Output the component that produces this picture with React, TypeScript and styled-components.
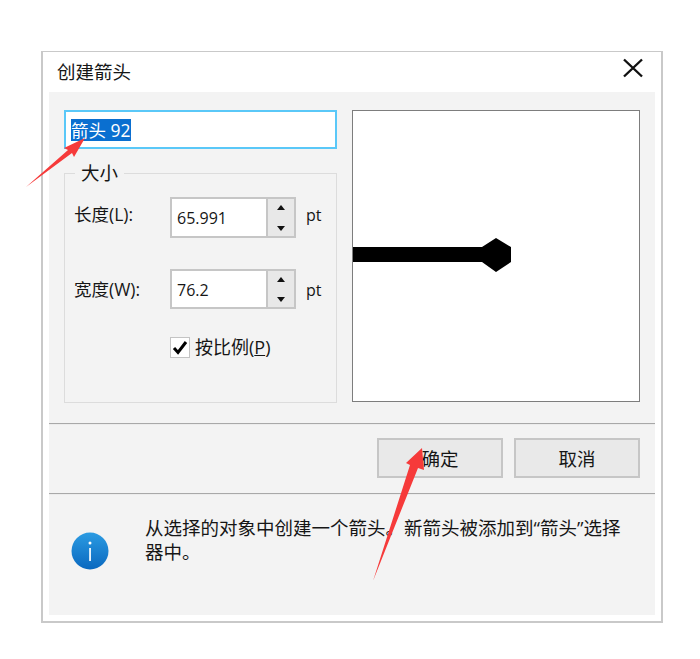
import React from "react";
import styled, { createGlobalStyle } from "styled-components";

const Global = createGlobalStyle`
  html, body { margin: 0; padding: 0; background: #fff; }
  body { font-family: "Open Sans", "Noto Sans CJK SC", sans-serif; color: #161616; }
  * { box-sizing: border-box; }
`;

const Page = styled.div`
  position: relative;
  width: 700px;
  height: 659px;
  padding: 51px 37px 37px 41px;
`;

const Dialog = styled.div`
  width: 622px;
  height: 572px;
  background: #fff;
  border: 2px solid #c9c9c9;
  border-top-width: 1px;
  display: flex;
  flex-direction: column;
`;

const TitleBar = styled.div`
  height: 40px;
  flex: none;
  display: flex;
  align-items: center;
  justify-content: space-between;
  padding: 0 17px 0 14px;
`;

const Title = styled.div`
  font-size: 18.5px;
  line-height: 40px;
`;

const CloseIcon = styled.svg`
  display: block;
  width: 22px;
  height: 20px;
  margin-top: -8px;
`;

const Panel = styled.div`
  flex: 1;
  margin: 0 6px 6px 6px;
  background: #f3f3f3;
  display: flex;
  flex-direction: column;
`;

const Main = styled.div`
  height: 331px;
  flex: none;
  padding: 18px 15px 0;
  display: flex;
  gap: 15px;
`;

const LeftCol = styled.div`
  width: 273px;
  display: flex;
  flex-direction: column;
  gap: 14px;
`;

const NameBox = styled.div`
  height: 39px;
  background: #fff;
  border: 2px solid #5ac8f8;
  padding: 7px 5px;
  font-size: 17.5px;
  line-height: 22px;
`;

const Selected = styled.span`
  display: inline-block;
  background: #0a6fd0;
  color: #fff;
`;

const Group = styled.fieldset`
  margin: -2px 0 0;
  height: 242px;
  padding: 0 0 0 9px;
  border: 1px solid #dcdcdc;
  min-width: 0;
`;

const Legend = styled.legend`
  margin-left: 1px;
  padding: 0 6px;
  font-size: 18.5px;
  line-height: 24px;
`;

const Row = styled.div<{ $top: number; $height: number }>`
  display: flex;
  align-items: center;
  height: ${(p) => p.$height}px;
  margin-top: ${(p) => p.$top}px;
`;

const RowLabel = styled.label<{ $lift: number }>`
  width: 96px;
  flex: none;
  font-size: 17.5px;
  margin-top: ${(p) => p.$lift}px;
  white-space: nowrap;
`;

const Spin = styled.div`
  width: 126px;
  height: 100%;
  flex: none;
  display: flex;
  border: 2px solid #c6c6c6;
  background: #e8e8e8;
`;

const SpinValue = styled.div`
  width: 96px;
  background: #fff;
  border-right: 2px solid #c6c6c6;
  font-size: 16px;
  line-height: 38px;
  padding-left: 5px;
`;

const SpinArrows = styled.div`
  flex: 1;
  display: flex;
  flex-direction: column;
  justify-content: space-between;
  align-items: center;
  padding: 6px 0 5px;
`;

const Tri = styled.div<{ $down?: boolean }>`
  width: 0;
  height: 0;
  border-left: 4px solid transparent;
  border-right: 4px solid transparent;
  ${(p) => (p.$down ? "border-top: 5px solid #111;" : "border-bottom: 5px solid #111;")}
`;

const Unit = styled.span<{ $lift: number }>`
  margin-left: 10px;
  margin-top: ${(p) => p.$lift}px;
  font-size: 16px;
`;

const CheckRow = styled.div`
  display: flex;
  align-items: center;
  gap: 5px;
  margin: 28px 0 0 96px;
`;

const CheckBox = styled.div`
  width: 20px;
  height: 21px;
  background: #fff;
  border: 1px solid #c4c4c4;
  display: flex;
  align-items: center;
  justify-content: center;
`;

const CheckLabel = styled.span`
  font-size: 18px;
  line-height: 21px;
`;

const Under = styled.span`
  text-decoration: underline;
`;

const Preview = styled.div`
  width: 288px;
  height: 292px;
  background: #fff;
  border: 1px solid #7d7d7d;
`;

const PreviewArt = styled.svg`
  display: block;
  width: 286px;
  height: 290px;
`;

const Separator = styled.div`
  height: 2px;
  flex: none;
  border-top: 1px solid #a8a8a8;
  border-bottom: 1px solid #ececec;
`;

const Buttons = styled.div`
  height: 68px;
  flex: none;
  padding: 13px 15px 0;
  display: flex;
  justify-content: flex-end;
  gap: 11px;
`;

const Button = styled.button`
  width: 126px;
  height: 40px;
  padding: 0;
  background: #e9e9e9;
  border: 2px solid #c6c6c6;
  border-radius: 0;
  font-family: inherit;
  font-size: 18.5px;
  color: #161616;
`;

const Info = styled.div`
  flex: 1;
  display: flex;
  padding: 21px 30px 0 22px;
`;

const InfoIcon = styled.svg`
  display: block;
  width: 38px;
  height: 38px;
  flex: none;
  margin: 16px 36px 0 0;
`;

const InfoText = styled.p`
  margin: 0;
  font-size: 18.5px;
  line-height: 24px;
`;

const Annotations = styled.svg`
  position: absolute;
  left: 0;
  top: 0;
  width: 700px;
  height: 659px;
  pointer-events: none;
`;

export default function App() {
  return (
    <Page>
      <Global />
      <Dialog>
        <TitleBar>
          <Title>创建箭头</Title>
          <CloseIcon viewBox="0 0 22 20">
            <path d="M2 1.5 L20 18.5 M20 1.5 L2 18.5" stroke="#111" strokeWidth="2.4" fill="none" />
          </CloseIcon>
        </TitleBar>
        <Panel>
          <Main>
            <LeftCol>
              <NameBox>
                <Selected>箭头 92</Selected>
              </NameBox>
              <Group>
                <Legend>大小</Legend>
                <Row $top={12} $height={41}>
                  <RowLabel $lift={-9}>长度(L):</RowLabel>
                  <Spin>
                    <SpinValue>65.991</SpinValue>
                    <SpinArrows>
                      <Tri />
                      <Tri $down />
                    </SpinArrows>
                  </Spin>
                  <Unit $lift={-5}>pt</Unit>
                </Row>
                <Row $top={31} $height={40}>
                  <RowLabel $lift={-1}>宽度(W):</RowLabel>
                  <Spin>
                    <SpinValue>76.2</SpinValue>
                    <SpinArrows>
                      <Tri />
                      <Tri $down />
                    </SpinArrows>
                  </Spin>
                  <Unit $lift={1}>pt</Unit>
                </Row>
                <CheckRow>
                  <CheckBox>
                    <svg width="16" height="15" viewBox="0 0 16 15">
                      <path d="M2 8 L6 12.5 L14 2" stroke="#000" strokeWidth="3" fill="none" />
                    </svg>
                  </CheckBox>
                  <CheckLabel>
                    按比例(<Under>P</Under>)
                  </CheckLabel>
                </CheckRow>
              </Group>
            </LeftCol>
            <Preview>
              <PreviewArt viewBox="0 0 286 290">
                <path d="M0 136 H129 L143 127 L158 136 V151 L143 161 L129 151 H0 Z" fill="#000" />
              </PreviewArt>
            </Preview>
          </Main>
          <Separator />
          <Buttons>
            <Button>确定</Button>
            <Button>取消</Button>
          </Buttons>
          <Separator />
          <Info>
            <InfoIcon viewBox="0 0 38 38">
              <defs>
                <linearGradient id="ig" x1="0" y1="0" x2="0" y2="1">
                  <stop offset="0" stopColor="#2b9be2" />
                  <stop offset="1" stopColor="#0a68bf" />
                </linearGradient>
              </defs>
              <circle cx="19" cy="19" r="18.5" fill="url(#ig)" />
              <rect x="18.2" y="16" width="1.7" height="13" fill="#fff" />
              <circle cx="19" cy="11" r="1.5" fill="#fff" />
            </InfoIcon>
            <InfoText>从选择的对象中创建一个箭头。新箭头被添加到“箭头”选择器中。</InfoText>
          </Info>
        </Panel>
      </Dialog>
      <Annotations viewBox="0 0 700 659">
        <path d="M26 187 L68 150 L64 148 L85 138 L74 157 L72 153 Z" fill="#f63a3a" />
        <path d="M373 581 L410 465 L406 463 L422 448 L424 470 L418 468 Z" fill="#f63a3a" />
      </Annotations>
    </Page>
  );
}
